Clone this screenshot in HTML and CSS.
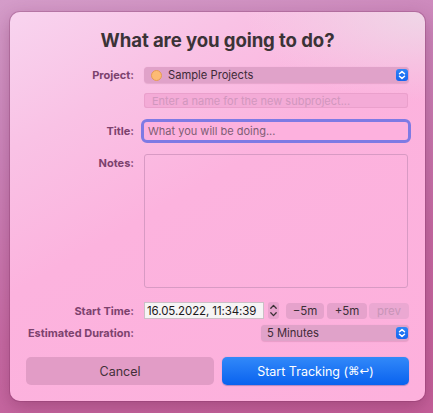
FILE: index.html
```html
<!DOCTYPE html>
<html>
<head>
<meta charset="utf-8">
<link rel="stylesheet" href="styles.css">
</head>
<body>
<div class="window">
  <h1 class="heading">What are you going to do?</h1>

  <div class="row row-project">
    <div class="label">Project:</div>
    <div class="popup popup-wide">
      <span class="dot"></span>
      <span class="popup-text">Sample Projects</span>
      <span class="blue-step"><svg width="12" height="12" viewBox="0 0 12 12"><path d="M3.5 4.8 L6 2.6 L8.5 4.8 M3.5 7.2 L6 9.4 L8.5 7.2" fill="none" stroke="#fff" stroke-width="1.5" stroke-linecap="round" stroke-linejoin="round"/></svg></span>
    </div>
  </div>

  <div class="row row-sub">
    <div class="label"></div>
    <div class="field field-sub">Enter a name for the new subproject...</div>
  </div>

  <div class="row row-title">
    <div class="label">Title:</div>
    <div class="field field-title">What you will be doing...</div>
  </div>

  <div class="row row-notes">
    <div class="label label-top">Notes:</div>
    <div class="notes"></div>
  </div>

  <div class="row row-start">
    <div class="label">Start Time:</div>
    <div class="start-controls">
      <div class="date-field">16.05.2022, 11:34:39</div>
      <div class="date-step"><svg width="11" height="17" viewBox="0 0 11 17"><path d="M2.8 6.2 L5.5 3.4 L8.2 6.2 M2.8 10.8 L5.5 13.6 L8.2 10.8" fill="none" stroke="#3b3036" stroke-width="1.3" stroke-linecap="round" stroke-linejoin="round"/></svg></div>
      <div class="mini-btn btn-minus">−5m</div>
      <div class="mini-btn btn-plus">+5m</div>
      <div class="mini-btn btn-prev">prev</div>
    </div>
  </div>

  <div class="row row-duration">
    <div class="label">Estimated Duration:</div>
    <div class="duration-wrap">
      <div class="popup popup-duration">
        <span class="popup-text">5 Minutes</span>
        <span class="blue-step"><svg width="12" height="12" viewBox="0 0 12 12"><path d="M3.5 4.8 L6 2.6 L8.5 4.8 M3.5 7.2 L6 9.4 L8.5 7.2" fill="none" stroke="#fff" stroke-width="1.5" stroke-linecap="round" stroke-linejoin="round"/></svg></span>
      </div>
    </div>
  </div>

  <div class="actions">
    <div class="btn btn-cancel">Cancel</div>
    <div class="btn btn-start">Start Tracking (<span class="sym">⌘↩</span>)</div>
  </div>
</div>
</body>
</html>
```

FILE: styles.css
```css
html, body {
  margin: 0;
  padding: 0;
}
body {
  width: 433px;
  height: 413px;
  overflow: hidden;
  background:
    linear-gradient(165deg, #d49cc9 0%, #cb84b9 30%, #c66aa3 65%, #c45f99 100%);
  font-family: Inter, "Noto Sans", "DejaVu Sans", sans-serif;
  padding-top: 12px;
  box-sizing: border-box;
}
.window {
  margin-left: 10px;
  width: 415px;
  height: 389px;
  box-sizing: border-box;
  border-radius: 10px;
  padding: 0 16px;
  background:
    radial-gradient(ellipse 180px 90px at 100% 0%, rgba(238, 218, 232, 0.9), rgba(238, 218, 232, 0) 100%),
    linear-gradient(150deg, #f8d4ef 0%, #f9c2e5 22%, #fcb3de 45%, #fdb0dc 100%);
  box-shadow: 0 0 0 1px rgba(120, 40, 90, 0.25), 0 6px 18px rgba(90, 20, 60, 0.3);
  overflow: hidden;
}
.heading {
  margin: 16px 0 15px;
  height: 24px;
  line-height: 24px;
  font-size: 18.6px;
  font-weight: 700;
  text-align: center;
  color: #3b3337;
  letter-spacing: -0.1px;
}
.row {
  display: flex;
  align-items: center;
  gap: 10px;
}
.label {
  width: 108px;
  flex: none;
  text-align: right;
  font-size: 11px;
  font-weight: 700;
  color: #7c426e;
  white-space: nowrap;
}
.label-top {
  align-self: flex-start;
  padding-top: 2px;
}
.row-project { height: 16px; }
.row-sub { height: 15px; margin-top: 10px; }
.row-title { height: 18px; margin-top: 14px; }
.row-notes { height: 134px; margin-top: 14px; }
.row-start { height: 17px; margin-top: 14px; }
.row-duration { height: 16px; margin-top: 6px; }

.popup {
  display: flex;
  align-items: center;
  height: 16px;
  border-radius: 4px;
  background: #e0a2c9;
  box-shadow: 0 0.5px 1px rgba(120, 40, 90, 0.15);
  box-sizing: border-box;
  padding: 0 1px 0 7px;
  font-size: 11.2px;
  color: #3e2a37;
}
.popup-wide { width: 265px; }
.dot {
  width: 11px;
  height: 11px;
  box-sizing: border-box;
  border-radius: 50%;
  background: #fdbb74;
  border: 1px solid #e69b55;
  margin-right: 6px;
  flex: none;
}
.popup-text { flex: 1; white-space: nowrap; }
.blue-step {
  width: 12px;
  height: 12px;
  border-radius: 3px;
  background: linear-gradient(#2f84f7, #1565ef);
  display: flex;
  flex: none;
}
.field {
  width: 264px;
  box-sizing: border-box;
  font-size: 11px;
  white-space: nowrap;
  display: flex;
  align-items: center;
}
.field-sub {
  height: 15px;
  border-radius: 3px;
  background: #f4abd7;
  box-shadow: inset 0 0 0 1px #eaa0cc;
  color: #d197be;
  padding-left: 8px;
}
.field-title {
  height: 18px;
  border-radius: 3px;
  background: #fdb1de;
  outline: 3px solid #7e7ae4;
  outline-offset: 0;
  color: #7d5d74;
  padding-left: 4px;
  font-size: 11px;
}
.notes {
  width: 264px;
  height: 134px;
  box-sizing: border-box;
  border: 1px solid #d89ac4;
  border-radius: 3px;
  align-self: stretch;
}
.start-controls {
  display: flex;
  align-items: center;
  height: 17px;
}
.date-field {
  width: 120px;
  height: 17px;
  box-sizing: border-box;
  background: #f6f4f5;
  box-shadow: inset 0 0 0 1px #cbbfc6;
  font-size: 11.5px;
  color: #1c1a1b;
  display: flex;
  align-items: center;
  padding-left: 3px;
  white-space: nowrap;
  letter-spacing: -0.1px;
}
.date-step {
  width: 11px;
  height: 17px;
  margin-left: 4px;
  border-radius: 3px;
  background: #e7a3cd;
  display: flex;
}
.mini-btn {
  height: 16px;
  border-radius: 4px;
  background: #e6a2cc;
  font-size: 11.5px;
  color: #3e2f38;
  display: flex;
  align-items: center;
  justify-content: center;
}
.btn-minus { width: 38px; margin-left: 7px; }
.btn-plus { width: 40px; margin-left: 3px; }
.btn-prev { width: 40px; margin-left: 2px; color: #c895b8; background: #eba8d2; }
.duration-wrap {
  width: 264px;
  display: flex;
  justify-content: flex-end;
}
.popup-duration {
  width: 148px;
  margin-right: -1px;
  padding-left: 6px;
}
.actions {
  display: flex;
  gap: 8px;
  margin-top: 16px;
}
.btn {
  height: 28px;
  border-radius: 5px;
  display: flex;
  align-items: center;
  justify-content: center;
  font-size: 12.5px;
}
.btn-cancel {
  width: 188px;
  background: #e29cc6;
  color: #433039;
}
.btn-start {
  width: 187px;
  background: linear-gradient(#3289f9, #0962ef);
  color: #ffffff;
  box-shadow: 0 0.5px 1px rgba(0, 40, 120, 0.3);
}
.sym {
  font-family: "DejaVu Sans", sans-serif;
  font-size: 11.5px;
}
```
